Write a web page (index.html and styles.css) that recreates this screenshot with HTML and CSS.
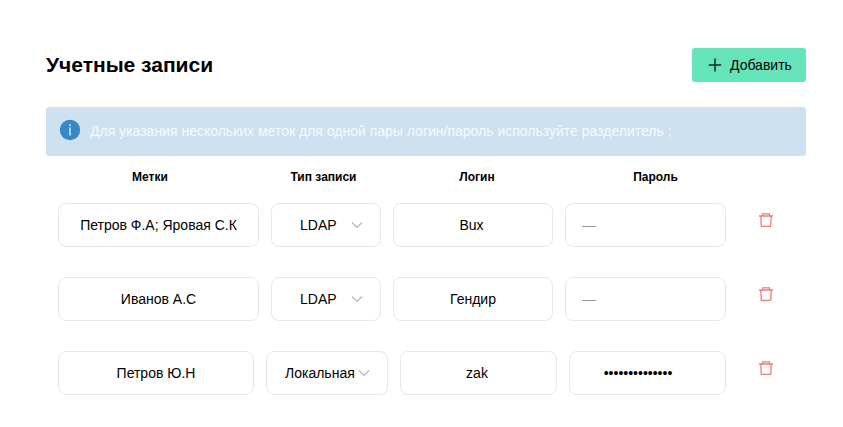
FILE: index.html
```html
<!DOCTYPE html>
<html lang="ru">
<head>
<meta charset="utf-8">
<title>Учетные записи</title>
<link rel="stylesheet" href="styles.css">
</head>
<body>
<svg class="defs" width="0" height="0">
  <symbol id="chevron" viewBox="0 0 12 12"><path d="M1 3.5 L6 8.5 L11 3.5" fill="none" stroke="currentColor" stroke-width="1.1"/></symbol>
  <symbol id="trash" viewBox="0 0 14 14"><path d="M0 3h14M3.5 3V.8h7V3M1.8 3l.5 10.4h9.4l.5-10.4" fill="none" stroke="currentColor" stroke-width="1.3" stroke-linejoin="round"/></symbol>
</svg>
<main class="page">
  <header class="header">
    <h1 class="title">Учетные записи</h1>
    <button class="add"><svg class="plus" viewBox="0 0 14 14"><path d="M.8 7h12.4M7 .5v13" fill="none" stroke="currentColor" stroke-width="1.5"/></svg><span>Добавить</span></button>
  </header>
  <div class="notice">
    <svg class="info" viewBox="0 0 20 20"><circle cx="10" cy="10" r="10.2" fill="#3788c8"/><path d="M10 7.4v8M10 4.2v1.8" stroke="#d3e5f3" stroke-width="1.6"/></svg>
    <span class="notice-text">Для указания нескольких меток для одной пары логин/пароль используйте разделитель ;</span>
  </div>
  <div class="row head"><span>Метки</span><span>Тип записи</span><span>Логин</span><span>Пароль</span></div>
  <div class="row">
    <div class="field">Петров Ф.А; Яровая С.К</div>
    <div class="field select"><span class="value">LDAP</span><svg class="chevron"><use href="#chevron"/></svg></div>
    <div class="field login">Bux</div>
    <div class="field empty">—</div>
    <svg class="trash"><use href="#trash"/></svg>
  </div>
  <div class="row">
    <div class="field">Иванов А.С</div>
    <div class="field select"><span class="value">LDAP</span><svg class="chevron"><use href="#chevron"/></svg></div>
    <div class="field">Гендир</div>
    <div class="field empty">—</div>
    <svg class="trash"><use href="#trash"/></svg>
  </div>
  <div class="row local">
    <div class="field">Петров Ю.Н</div>
    <div class="field select"><span class="value">Локальная</span><svg class="chevron"><use href="#chevron"/></svg></div>
    <div class="field login">zak</div>
    <div class="field password">••••••••••••••</div>
    <svg class="trash"><use href="#trash"/></svg>
  </div>
</main>
</body>
</html>
```
FILE: styles.css
```css
* { box-sizing: border-box; }
body { margin: 0; background: #fff; color: #000; font: 14px/20px "Liberation Sans", Arial, sans-serif; }
.defs { display: block; }
.page { width: 760px; margin-left: 46px; padding-top: 48px; }
.header { display: flex; justify-content: space-between; align-items: center; height: 34px; }
.title { margin: 0; font-size: 21px; line-height: 28px; }
.add { display: flex; align-items: center; gap: 8px; width: 114px; height: 34px; padding: 0 0 0 16px; border: 0; border-radius: 3px; background: #65e4b9; color: #000; font: inherit; }
.plus { width: 14px; height: 14px; color: #0c2c22; }
.notice { display: flex; align-items: center; gap: 10px; height: 49px; margin-top: 25px; padding-left: 14px; border-radius: 3px; background: #cee1f0; color: #f5fafd; }
.info { width: 20px; height: 20px; margin-top: -3px; overflow: visible; }
.notice-text { padding-bottom: 2px; }
.row { display: grid; grid-template-columns: 201px 110px 160px 161px 1fr; column-gap: 12px; height: 44px; margin-bottom: 30px; padding-left: 12px; }
.row.local { grid-template-columns: 196px 122px 157px 157px 1fr; }
.row.head { grid-template-columns: 208px 139px 168px 189px; column-gap: 0; padding-left: 0; height: 42px; margin-bottom: 5px; align-items: center; text-align: center; font-size: 12px; font-weight: 700; }
.field { display: flex; align-items: center; justify-content: center; height: 44px; border: 1px solid #e5e7e9; border-radius: 8px; white-space: nowrap; }
.select { justify-content: flex-start; padding-left: 28px; }
.select .chevron { margin-left: 14px; }
.local .select { padding-left: 18px; }
.local .select .chevron { margin-left: 3px; }
.login { padding-right: 3px; }
.chevron { flex: none; width: 12px; height: 12px; color: #b0b4be; }
.empty { justify-content: flex-start; padding-left: 16px; color: #9599a7; }
.password { padding-right: 19px; }
.trash { width: 14px; height: 14px; margin: 10px 0 0 21px; color: #ec7d7d; }
```
